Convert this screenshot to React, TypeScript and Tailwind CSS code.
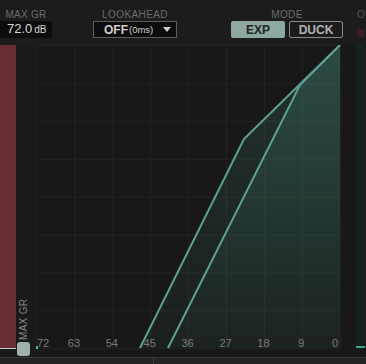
const GRID = 37.9
const LABELS = ['72', '63', '54', '45', '36', '27', '18', '9', '0']

function Header() {
  return (
    <div className="h-[45px] shrink-0 flex items-start bg-[#1c1c1c] overflow-hidden">
      {/* max gain reduction */}
      <div className="w-[52px] shrink-0 flex flex-col items-center">
        <span className="h-[12px] mt-[9px] text-[10px] leading-[12px] tracking-[0.3px] text-[#6c6c6c]">MAX GR</span>
        <div className="w-full h-[17px] bg-[#0d0d0d] flex items-end pl-[7px] pb-[1px] text-[#d6d6d6]">
          <span className="text-[13px] leading-[16px]">72.0</span>
          <span className="text-[10px] leading-[15px] ml-[2px]">dB</span>
        </div>
      </div>

      {/* lookahead */}
      <div className="ml-[41px] w-[84px] shrink-0 flex flex-col items-center">
        <span className="h-[12px] mt-[9px] text-[10px] leading-[12px] tracking-[0.4px] text-[#6c6c6c]">LOOKAHEAD</span>
        <div className="w-full h-[17px] bg-[#0d0d0d] border border-[#5c5c5c] flex items-center pl-[10px] pr-[5px] text-[#cfcfcf]">
          <span className="text-[12px] leading-[14px] font-bold">OFF</span>
          <span className="text-[9.5px] leading-[14px] mt-[1px] ml-[1px]">(0ms)</span>
          <span className="ml-auto w-0 h-0 border-l-[4px] border-r-[4px] border-t-[5px] border-l-transparent border-r-transparent border-t-[#cfcfcf]" />
        </div>
      </div>

      {/* mode */}
      <div className="ml-[54px] w-[112px] shrink-0 flex flex-col items-center">
        <span className="h-[12px] mt-[9px] text-[10px] leading-[12px] tracking-[0.4px] text-[#6c6c6c]">MODE</span>
        <div className="w-full flex gap-[4px]">
          <div className="w-[54px] h-[17px] rounded-[2px] bg-[#8da7a2] flex items-center justify-center text-[12px] font-bold text-[#1f2523]">EXP</div>
          <div className="w-[54px] h-[17px] rounded-[2px] border border-[#8a8a8a] flex items-center justify-center text-[12px] font-bold text-[#b2b2b2]">DUCK</div>
        </div>
      </div>

      {/* output meter header */}
      <div className="ml-[14px] shrink-0 flex flex-col">
        <span className="h-[12px] mt-[9px] text-[10px] leading-[12px] tracking-[0.4px] text-[#555]">OUT</span>
        <div className="mt-[8px] w-[7px] h-[8px] bg-[#3a1f23]" />
      </div>
    </div>
  )
}

function Graph() {
  const outer = '104,303 208,94 304,0'
  const inner = '132,303 264,40 304,0'
  return (
    <svg width={305} height={312} className="shrink-0">
      <defs>
        <linearGradient id="fillA" x1="0" y1="0" x2="0" y2="1">
          <stop offset="0" stopColor="#4a9a8a" stopOpacity="0.2" />
          <stop offset="1" stopColor="#4a9a8a" stopOpacity="0.05" />
        </linearGradient>
        <linearGradient id="fillB" x1="0" y1="0" x2="0" y2="1">
          <stop offset="0" stopColor="#4a9a8a" stopOpacity="0.24" />
          <stop offset="1" stopColor="#4a9a8a" stopOpacity="0.03" />
        </linearGradient>
      </defs>
      {Array.from({ length: 9 }, (_, i) => (
        <line key={'v' + i} x1={1 + i * GRID} y1={0} x2={1 + i * GRID} y2={303.5} stroke="#232323" strokeWidth={1} />
      ))}
      {Array.from({ length: 9 }, (_, i) => (
        <line key={'h' + i} x1={1} y1={0.5 + i * GRID} x2={304} y2={0.5 + i * GRID} stroke="#232323" strokeWidth={1} />
      ))}
      <polygon points={`${outer} 304,303`} fill="url(#fillA)" />
      <polygon points={`${inner} 304,303`} fill="url(#fillB)" />
      <polyline points={outer} fill="none" stroke="#5c9f92" strokeWidth={2} strokeLinejoin="round" />
      <polyline points={inner} fill="none" stroke="#5c9f92" strokeWidth={2} strokeLinejoin="round" />
      <rect x={0} y={301} width={2} height={3} fill="#4ec0a8" />
      {LABELS.map((l, i) => (
        <text
          key={l}
          x={i === 0 ? 1 : i === 8 ? 302 : i * GRID}
          y={302}
          textAnchor={i === 0 ? 'start' : i === 8 ? 'end' : 'middle'}
          fontSize={11}
          fill="#7a7a7a"
          fontFamily="'Liberation Sans', Arial, sans-serif"
        >
          {l}
        </text>
      ))}
    </svg>
  )
}

export default function App() {
  return (
    <div className="w-[366px] h-[364px] overflow-hidden flex flex-col bg-[#181818] font-['Liberation_Sans',Arial,sans-serif]">
      <Header />

      <div className="h-[312px] shrink-0 flex">
        {/* gain reduction meter */}
        <div className="w-[16px] shrink-0 flex flex-col">
          <div className="h-[303px] bg-[#6a2c35]" />
          <div className="h-[1px] bg-[#c2cac8]" />
        </div>

        {/* meter caption + slider thumb */}
        <div className="w-[20px] shrink-0 relative bg-[#1a1a1a]">
          <span className="absolute left-[2px] top-[261px] origin-top-left -rotate-90 translate-y-[34px] text-[10px] leading-[11px] tracking-[0.3px] text-[#858585] whitespace-nowrap">
            MAX GR
          </span>
          <div className="absolute left-[1px] top-[297px] w-[13px] h-[14px] rounded-[3px] bg-[#a2b0ad]" />
        </div>

        <Graph />

        <div className="w-[15px] shrink-0" />

        {/* output meter */}
        <div className="w-[9px] shrink-0 flex flex-col">
          <div className="h-[301px] bg-[#16201e]" />
          <div className="h-[2px] bg-[#3aa590]" />
        </div>
      </div>

      {/* bottom strip */}
      <div className="flex-1 flex border-t border-[#393939] bg-[#232323]">
        <div className="w-[154px] border-r border-[#3a3a3a]" />
      </div>
    </div>
  )
}
